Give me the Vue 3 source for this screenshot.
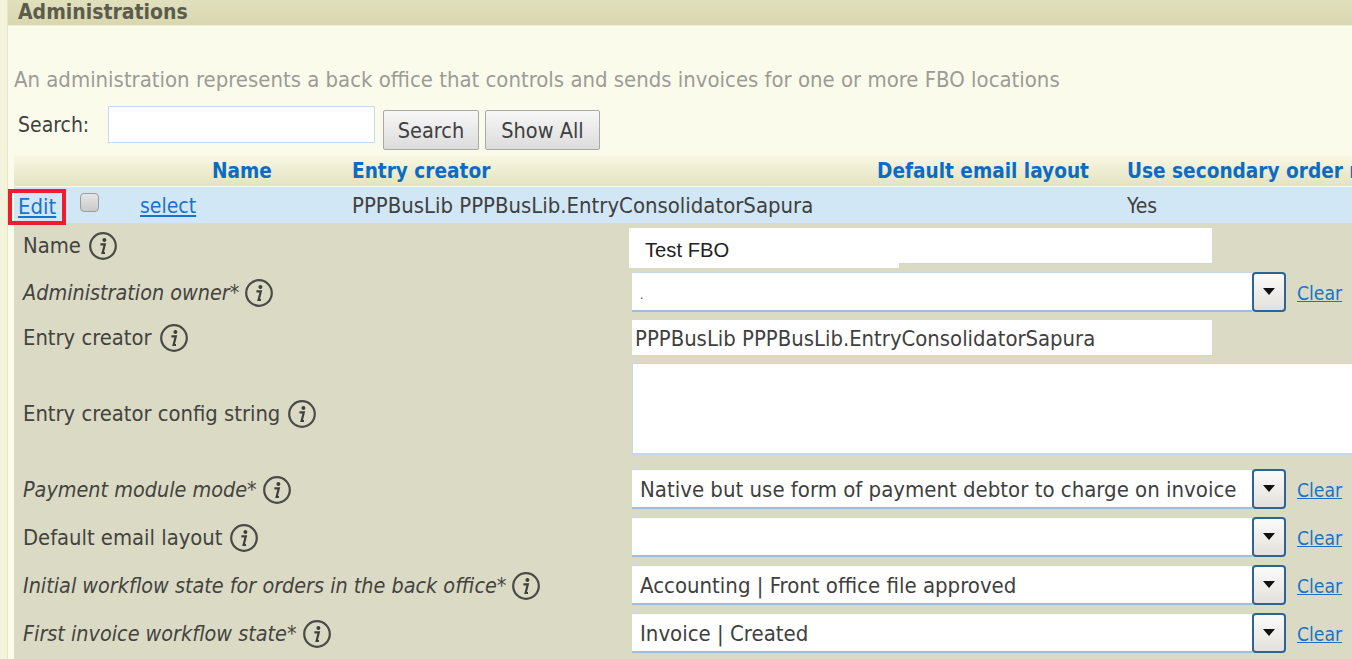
<script setup>
const rows = [
  { label: 'Name', kind: 'name', h: 44 },
  { label: 'Administration owner*', italic: true, kind: 'select', value: '.', h: 48, small: true },
  { label: 'Entry creator', kind: 'input', value: 'PPPBusLib PPPBusLib.EntryConsolidatorSapura', h: 43 },
  { label: 'Entry creator config string', kind: 'area', h: 106 },
  { label: 'Payment module mode*', italic: true, kind: 'select', value: 'Native but use form of payment debtor to charge on invoice', h: 48 },
  { label: 'Default email layout', kind: 'select', value: '', h: 48 },
  { label: 'Initial workflow state for orders in the back office*', italic: true, kind: 'select', value: 'Accounting | Front office file approved', h: 48 },
  { label: 'First invoice workflow state*', italic: true, kind: 'select', value: 'Invoice | Created', h: 48 }
]
</script>

<template>
  <div class="page">
    <div class="strip"></div>
    <main class="content">
      <h1 class="title">Administrations</h1>
      <p class="intro">An administration represents a back office that controls and sends invoices for one or more FBO locations</p>
      <div class="search">
        <label class="search-label">Search:</label>
        <input class="search-input" type="text" />
        <button class="btn btn-search">Search</button>
        <button class="btn btn-all">Show All</button>
      </div>
      <div class="table-head">
        <span class="h-name">Name</span>
        <span class="h-entry">Entry creator</span>
        <span class="h-email">Default email layout</span>
        <span class="h-secondary">Use secondary order r</span>
      </div>
      <div class="table-row">
        <a class="edit" href="#">Edit</a>
        <span class="check"></span>
        <a class="select-link" href="#">select</a>
        <span class="r-entry">PPPBusLib PPPBusLib.EntryConsolidatorSapura</span>
        <span class="r-yes">Yes</span>
      </div>
      <div class="form">
        <div v-for="row in rows" :key="row.label" class="form-row" :class="'k-' + row.kind" :style="{ height: row.h + 'px' }">
          <div class="label" :class="{ italic: row.italic }">
            <span>{{ row.label }}</span>
            <svg class="info" viewBox="0 0 28 28" width="28" height="28" aria-hidden="true">
              <circle cx="14" cy="14" r="12.8" fill="none" stroke="#4a4a46" stroke-width="2.2" />
              <circle cx="15.4" cy="8" r="2" fill="#3f3f3c" />
              <path d="M11.4 12.4h4.4l-2.2 8.6h2.4" fill="none" stroke="#3f3f3c" stroke-width="2.2" />
            </svg>
          </div>
          <div class="field">
            <div v-if="row.kind === 'name'" class="input name-input">
              <span class="mask">Test FBO</span>
            </div>
            <div v-else-if="row.kind === 'input'" class="input">{{ row.value }}</div>
            <div v-else-if="row.kind === 'area'" class="area"></div>
            <template v-else>
              <div class="combo">
                <div class="combo-text" :class="{ tiny: row.small }">{{ row.value }}</div>
                <div class="combo-btn"><span class="arrow"></span></div>
              </div>
              <a class="clear" href="#">Clear</a>
            </template>
          </div>
        </div>
      </div>
    </main>
  </div>
</template>

<style scoped>
.page {
  display: flex;
  width: 1352px;
  height: 659px;
  overflow: hidden;
  background: #fbfbec;
  font-family: "DejaVu Sans Condensed", "DejaVu Sans", sans-serif;
  font-stretch: condensed;
  color: #3b3b38;
}
.strip {
  flex: 0 0 8px;
  background: #f4f3dc;
  border-right: 1px solid #e9e7c5;
  box-sizing: border-box;
}
.content {
  flex: 1;
  min-width: 0;
}
.title {
  margin: 0;
  height: 26px;
  padding-left: 10px;
  box-sizing: border-box;
  background: linear-gradient(#e1e0bd, #d8d7b0);
  border-bottom: 1px solid #eeedd5;
  font-size: 21px;
  line-height: 25px;
  font-weight: 700;
  color: #5c5c4c;
}
.intro {
  margin: 0;
  padding: 40px 0 0 6px;
  font-size: 21.95px;
  line-height: 28px;
  color: #9c9c96;
  white-space: nowrap;
}
.search {
  display: flex;
  align-items: flex-start;
  height: 48px;
  padding: 12px 0 0 10px;
}
.search-label {
  width: 90px;
  padding-top: 5px;
  font-size: 21px;
  line-height: 28px;
  color: #3f3f3f;
}
.search-input {
  width: 267px;
  height: 37px;
  padding: 0;
  margin: 0 8px 0 0;
  box-sizing: border-box;
  background: #fff;
  border: 1px solid #c3d9f5;
  outline: none;
}
.btn {
  height: 40px;
  margin: 4px 6px 0 0;
  padding: 0;
  box-sizing: border-box;
  font: inherit;
  font-size: 21.5px;
  color: #3f3f3f;
  background: linear-gradient(#f7f7f7, #dcdcdc);
  border: 1px solid #a9a9a4;
  border-radius: 2px;
}
.btn-search { width: 96px; }
.btn-all { width: 115px; }
.table-head {
  position: relative;
  height: 31px;
  margin-top: 1px;
  margin-left: 6px;
  background: linear-gradient(#f9f8e4, #e3e2c0);
  font-size: 20.6px;
  line-height: 33px;
  font-weight: 700;
  color: #0a6cc4;
  white-space: nowrap;
}
.table-head span { position: absolute; top: 0; }
.h-name { left: 198px; }
.h-entry { left: 338px; }
.h-email { left: 863px; }
.h-secondary { left: 1113px; }
.table-row {
  position: relative;
  height: 36px;
  margin-top: 1px;
  margin-left: 6px;
  background: #d2e7f5;
  font-size: 21.95px;
  line-height: 38px;
  white-space: nowrap;
  color: #3f3f3f;
}
.table-row > * { position: absolute; top: 0; }
.edit {
  left: -6px;
  top: 2px;
  width: 58px;
  height: 36px;
  box-sizing: border-box;
  border: 4px solid #ed1c2e;
  padding-left: 6px;
  line-height: 28px;
  color: #1874c9;
}
.select-link { left: 126px; font-size: 21px; color: #1874c9; }
.check {
  left: 66px;
  top: 6px;
  width: 19px;
  height: 19px;
  box-sizing: border-box;
  border: 1px solid #9c9c9c;
  border-radius: 4px;
  background: linear-gradient(#e6e6e6, #c9c9c9);
}
.r-entry { left: 338px; }
.r-yes { left: 1113px; font-size: 21px; }
.form {
  margin-left: 6px;
  background: #dbdac5;
  height: 436px;
  padding-top: 5px;
  box-sizing: border-box;
}
.form-row {
  display: flex;
}
.label {
  flex: 0 0 618px;
  display: flex;
  align-items: center;
  gap: 8px;
  padding-left: 9px;
  box-sizing: border-box;
  font-size: 21.8px;
  line-height: 28px;
  color: #43433f;
  white-space: nowrap;
}
.k-name .label, .k-input .label { align-items: flex-start; padding-top: 4px; }
.k-select .label { align-items: flex-start; padding-top: 7px; }
.k-area .label { padding-bottom: 5px; }
.italic { font-style: italic; font-size: 21.4px; gap: 6px; }
.info { flex: none; }
.field {
  flex: 1;
  display: flex;
  align-items: flex-start;
  min-width: 0;
}
.input {
  width: 580px;
  height: 36px;
  box-sizing: border-box;
  padding-left: 3px;
  background: #fff;
  border-bottom: 1px solid #c6d8ef;
  font-size: 21.9px;
  line-height: 37px;
  color: #3f3f3f;
  white-space: nowrap;
}
.name-input { position: relative; }
.mask {
  position: absolute;
  left: -3px;
  top: 0;
  width: 270px;
  height: 40px;
  padding-left: 16px;
  box-sizing: border-box;
  background: #fff;
  font-family: "Liberation Sans", Arial, sans-serif;
  font-size: 20.2px;
  line-height: 44px;
  color: #222;
}
.area {
  width: 720px;
  height: 92px;
  background: #fff;
  border-top: 1px solid #c6d8ef;
  border-left: 1px solid #c6d8ef;
  border-bottom: 2px solid #c6d8ef;
  box-sizing: border-box;
}
.combo {
  display: flex;
  width: 654px;
  height: 40px;
}
.combo-text {
  flex: 1;
  box-sizing: border-box;
  padding-left: 8px;
  background: #fff;
  border-top: 1px solid #c6d8ef;
  border-bottom: 2px solid #9fbde0;
  font-size: 22px;
  line-height: 39px;
  color: #3f3f3f;
  white-space: nowrap;
  overflow: hidden;
}
.tiny { font-size: 12px; line-height: 44px; }
.combo-btn {
  flex: 0 0 34px;
  display: flex;
  justify-content: center;
  padding-top: 14px;
  box-sizing: border-box;
  background: linear-gradient(#fbfbfb, #e3e1dc);
  border: 2px solid #2c6496;
  border-radius: 4px;
}
.arrow {
  width: 0;
  height: 0;
  border-left: 6px solid transparent;
  border-right: 6px solid transparent;
  border-top: 7px solid #111;
}
.clear {
  margin: 8px 0 0 11px;
  font-size: 19.2px;
  line-height: 27px;
  color: #1874c9;
}
</style>

<style>
html, body { margin: 0; overflow: hidden; }
</style>
